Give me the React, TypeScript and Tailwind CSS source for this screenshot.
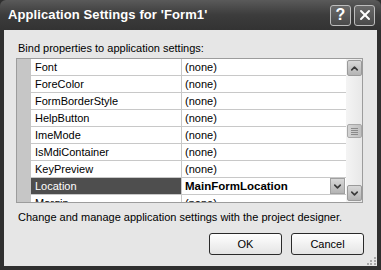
import { ChevronDown, ChevronUp, X } from 'lucide-react'

const rows = [
  { name: 'Font', value: '(none)' },
  { name: 'ForeColor', value: '(none)' },
  { name: 'FormBorderStyle', value: '(none)' },
  { name: 'HelpButton', value: '(none)' },
  { name: 'ImeMode', value: '(none)' },
  { name: 'IsMdiContainer', value: '(none)' },
  { name: 'KeyPreview', value: '(none)' },
  { name: 'Location', value: 'MainFormLocation', selected: true },
  { name: 'Margin', value: '(none)' },
]

function ScrollButton({ down }: { down?: boolean }) {
  return (
    <div className="w-[15px] h-[16px] flex items-center justify-center bg-gradient-to-b from-[#d8d8d8] to-[#b4b4b4] border border-[#9a9a9a] rounded-[2px]">
      {down ? (
        <ChevronDown size={11} strokeWidth={3.5} color="#3a3a3a" />
      ) : (
        <ChevronUp size={11} strokeWidth={3.5} color="#3a3a3a" />
      )}
    </div>
  )
}

export default function App() {
  return (
    <div
      className="w-[381px] h-[270px] bg-[#2f2f2f] flex flex-col overflow-hidden"
      style={{ fontFamily: '"Liberation Sans", Arial, sans-serif' }}
    >
      {/* title bar */}
      <div className="h-[30px] flex items-center justify-between pl-2 pr-[6px] bg-gradient-to-b from-[#5a5a5a] via-[#3c3c3c] to-[#333333] rounded-t-[6px]">
        <span className="text-white font-bold text-[13px] tracking-[0.1px]">
          Application Settings for 'Form1'
        </span>
        <div className="flex gap-[3px]">
          <div className="w-[21px] h-[21px] rounded-[3px] border border-[#bdbdbd] bg-gradient-to-b from-[#6a6a6a] to-[#4a4a4a] flex items-center justify-center text-white font-bold text-[16px] leading-none">
            ?
          </div>
          <div className="w-[21px] h-[21px] rounded-[3px] border border-[#bdbdbd] bg-gradient-to-b from-[#6a6a6a] to-[#4a4a4a] flex items-center justify-center">
            <X size={16} strokeWidth={3} color="#ffffff" />
          </div>
        </div>
      </div>

      {/* client area */}
      <div className="flex-1 mx-[4px] mb-[4px] bg-[#e6e6e6] relative pt-[12px] pl-[14px] pr-[10px] text-[11px] text-black">
        <div className="leading-[13px]">Bind properties to application settings:</div>

        {/* grid */}
        <div className="mt-[3px] ml-[-2px] w-[347px] h-[145px] border border-[#9c9c9c] bg-white flex overflow-hidden">
          <div className="w-[14px] bg-[#c6c6c6] shrink-0" />
          <div className="flex-1 flex flex-col overflow-hidden">
            {rows.map((r) => (
              <div key={r.name} className="h-[17px] shrink-0 flex border-b border-[#c8c8c8]">
                <div
                  className={`w-[151px] shrink-0 pl-[4px] leading-[16px] border-r border-[#c8c8c8] ${
                    r.selected ? 'bg-[#4e4e4e] text-white' : ''
                  }`}
                >
                  {r.name}
                </div>
                <div
                  className={`flex-1 pl-[3px] leading-[16px] flex justify-between ${
                    r.selected ? 'font-bold text-[11.5px]' : ''
                  }`}
                >
                  <span>{r.value}</span>
                  {r.selected && (
                    <div className="w-[15px] h-[16px] mr-[1px] flex items-center justify-center bg-gradient-to-b from-[#d8d8d8] to-[#b4b4b4] border border-[#a0a0a0]">
                      <ChevronDown size={11} strokeWidth={3.5} color="#3a3a3a" />
                    </div>
                  )}
                </div>
              </div>
            ))}
          </div>
          {/* scrollbar */}
          <div className="w-[16px] shrink-0 bg-gradient-to-r from-[#f4f4f4] to-[#e8e8e8] flex flex-col justify-between items-center pt-[1px] pb-[1px]">
            <ScrollButton />
            <div className="flex-1 w-full flex flex-col items-center pt-[48px]">
              <div className="w-[15px] h-[14px] bg-gradient-to-r from-[#d4d4d4] to-[#c0c0c0] border border-[#a8a8a8] rounded-[2px] flex flex-col items-center justify-center gap-[1px]">
                <div className="w-[7px] h-[1px] bg-[#8a8a8a]" />
                <div className="w-[7px] h-[1px] bg-[#8a8a8a]" />
                <div className="w-[7px] h-[1px] bg-[#8a8a8a]" />
                <div className="w-[7px] h-[1px] bg-[#8a8a8a]" />
              </div>
            </div>
            <ScrollButton down />
          </div>
        </div>

        <div className="mt-[8px] leading-[13px]">
          Change and manage application settings with the project designer.
        </div>

        {/* buttons */}
        <div className="mt-[9px] flex justify-end gap-[9px] pr-[3px]">
          <button className="w-[73px] h-[22px] rounded-[3px] border border-[#2a2a2a] bg-gradient-to-b from-[#ffffff] to-[#e4e4e4] text-[11px]">
            OK
          </button>
          <button className="w-[73px] h-[22px] rounded-[3px] border border-[#2a2a2a] bg-gradient-to-b from-[#ffffff] to-[#e4e4e4] text-[11px]">
            Cancel
          </button>
        </div>

        {/* resize grip */}
        <div className="absolute right-[1px] bottom-[1px] grid grid-cols-3 gap-[1px] w-[9px]">
          <div />
          <div />
          <div className="w-[2px] h-[2px] bg-[#a8a8a8]" />
          <div />
          <div className="w-[2px] h-[2px] bg-[#a8a8a8]" />
          <div className="w-[2px] h-[2px] bg-[#a8a8a8]" />
          <div className="w-[2px] h-[2px] bg-[#a8a8a8]" />
          <div className="w-[2px] h-[2px] bg-[#a8a8a8]" />
          <div className="w-[2px] h-[2px] bg-[#a8a8a8]" />
        </div>
      </div>
    </div>
  )
}
